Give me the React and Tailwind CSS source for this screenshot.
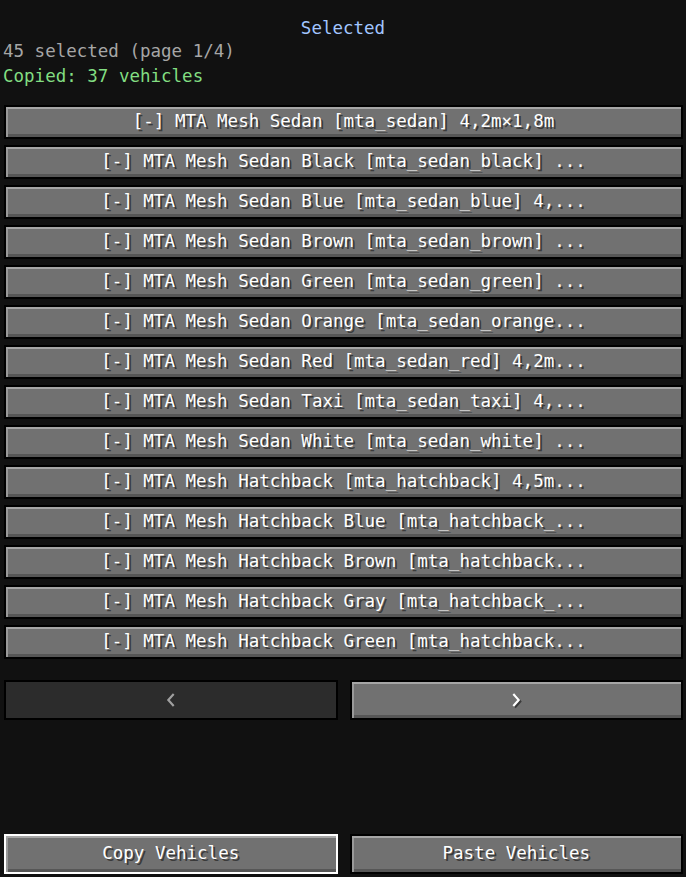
import React from "react";

const vehicles = [
  "[-] MTA Mesh Sedan [mta_sedan] 4,2m×1,8m",
  "[-] MTA Mesh Sedan Black [mta_sedan_black] ...",
  "[-] MTA Mesh Sedan Blue [mta_sedan_blue] 4,...",
  "[-] MTA Mesh Sedan Brown [mta_sedan_brown] ...",
  "[-] MTA Mesh Sedan Green [mta_sedan_green] ...",
  "[-] MTA Mesh Sedan Orange [mta_sedan_orange...",
  "[-] MTA Mesh Sedan Red [mta_sedan_red] 4,2m...",
  "[-] MTA Mesh Sedan Taxi [mta_sedan_taxi] 4,...",
  "[-] MTA Mesh Sedan White [mta_sedan_white] ...",
  "[-] MTA Mesh Hatchback [mta_hatchback] 4,5m...",
  "[-] MTA Mesh Hatchback Blue [mta_hatchback_...",
  "[-] MTA Mesh Hatchback Brown [mta_hatchback...",
  "[-] MTA Mesh Hatchback Gray [mta_hatchback_...",
  "[-] MTA Mesh Hatchback Green [mta_hatchback...",
];

const font = "font-['DejaVu_Sans_Mono',monospace] text-[17.5px] leading-none";

// pixel-style arrow used on the page buttons
function Chevron({ dir }) {
  const d = dir === "left" ? "M6 1 L1 6.5 L6 12" : "M1 1 L6 6.5 L1 12";
  return (
    <svg width="8" height="14" viewBox="0 0 7 13" className="overflow-visible">
      {dir === "right" && (
        <path d={d} transform="translate(1.5 1.5)" fill="none" stroke="#3a3a3a" strokeWidth="2" />
      )}
      <path d={d} fill="none" stroke="currentColor" strokeWidth="2" strokeLinejoin="miter" />
    </svg>
  );
}

function McButton({ children, height = "h-[34px]", focused = false, disabled = false }) {
  if (disabled) {
    return (
      <div
        className={`${height} flex items-center justify-center border-2 border-black bg-[#2c2c2c] text-[#a0a0a0] ${font}`}
      >
        {children}
      </div>
    );
  }
  return (
    <div
      className={`${height} flex items-center justify-center border-2 ${
        focused ? "border-white" : "border-black"
      } bg-[#717171] text-white font-medium shadow-[inset_0_2px_0_#a6a6a6,inset_2px_0_0_#999,inset_0_-3px_0_#565656] [text-shadow:2px_2px_0_#3a3a3a] ${font}`}
    >
      {children}
    </div>
  );
}

export default function App() {
  return (
    <div className="w-[686px] h-[877px] bg-[#111111] overflow-hidden flex flex-col">
      <div className={`mt-[19px] h-[20px] flex items-center justify-center text-[#a2c6ff] ${font}`}>
        Selected
      </div>
      <div className={`mt-[3px] h-[20px] flex items-center px-[3px] text-[#a6a6a6] ${font}`}>
        45 selected (page 1/4)
      </div>
      <div className={`mt-[5px] h-[20px] flex items-center px-[3px] text-[#82de82] ${font}`}>
        Copied: 37 vehicles
      </div>

      <div className="mt-[18px] flex flex-col gap-[6px] pl-[4px] pr-[3px]">
        {vehicles.map((name) => (
          <McButton key={name}>{name}</McButton>
        ))}
      </div>

      <div className="mt-[21px] grid grid-cols-2 gap-[12px] pl-[4px] pr-[3px]">
        <McButton height="h-[40px]" disabled>
          <Chevron dir="left" />
        </McButton>
        <McButton height="h-[40px]">
          <Chevron dir="right" />
        </McButton>
      </div>

      <div className="mt-auto mb-[3px] grid grid-cols-2 gap-[12px] pl-[4px] pr-[3px]">
        <McButton height="h-[40px]" focused>
          Copy Vehicles
        </McButton>
        <McButton height="h-[40px]">Paste Vehicles</McButton>
      </div>
    </div>
  );
}
